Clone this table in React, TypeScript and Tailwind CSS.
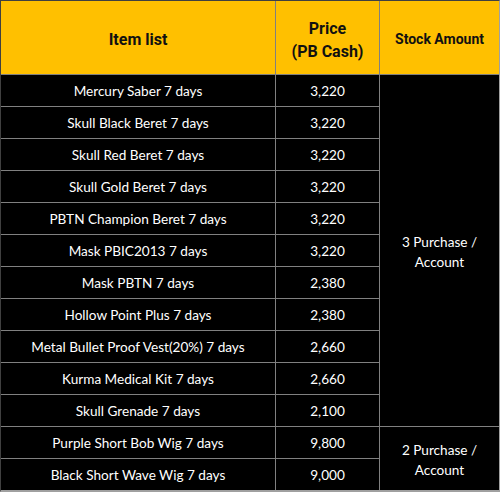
import React from "react";

export default function App() {
  // rows of the price table
  const items = [
    { name: "Mercury Saber 7 days", price: "3,220" },
    { name: "Skull Black Beret 7 days", price: "3,220" },
    { name: "Skull Red Beret 7 days", price: "3,220" },
    { name: "Skull Gold Beret 7 days", price: "3,220" },
    { name: "PBTN Champion Beret 7 days", price: "3,220" },
    { name: "Mask PBIC2013 7 days", price: "3,220" },
    { name: "Mask PBTN 7 days", price: "2,380" },
    { name: "Hollow Point Plus 7 days", price: "2,380" },
    { name: "Metal Bullet Proof Vest(20%) 7 days", price: "2,660" },
    { name: "Kurma Medical Kit 7 days", price: "2,660" },
    { name: "Skull Grenade 7 days", price: "2,100" },
    { name: "Purple Short Bob Wig 7 days", price: "9,800" },
    { name: "Black Short Wave Wig 7 days", price: "9,000" },
  ];

  const head =
    "bg-[#ffc000] flex items-center justify-center text-center pt-1 text-[#111] font-bold [font-family:Roboto,sans-serif]";
  const cell =
    "bg-black flex items-center justify-center text-center pt-[2px] text-white text-[13.6px] [font-family:Lato,sans-serif]";

  return (
    <div className="w-[500px] h-[492px] border-t border-l border-[#404040] border-r border-r-[#a0a0a0] border-b-2 border-b-[#a0a0a0] bg-[#808080]">
      <div className="grid grid-cols-[274px_103px_119px] grid-rows-[73px_repeat(13,31px)] gap-px">
        <div className={`${head} text-[16px]`}>Item list</div>
        <div className={`${head} text-[16px] leading-[23px]`}>
          Price
          <br />
          (PB Cash)
        </div>
        <div className={`${head} text-[14px]`}>Stock Amount</div>

        {items.map((item, i) => (
          <React.Fragment key={item.name}>
            <div className={cell}>{item.name}</div>
            <div className={cell}>{item.price}</div>
            {i === 0 && (
              <div className={`${cell} row-span-11 leading-[20px]`}>
                3 Purchase /
                <br />
                Account
              </div>
            )}
            {i === 11 && (
              <div className={`${cell} row-span-2 leading-[20px]`}>
                2 Purchase /
                <br />
                Account
              </div>
            )}
          </React.Fragment>
        ))}
      </div>
    </div>
  );
}
